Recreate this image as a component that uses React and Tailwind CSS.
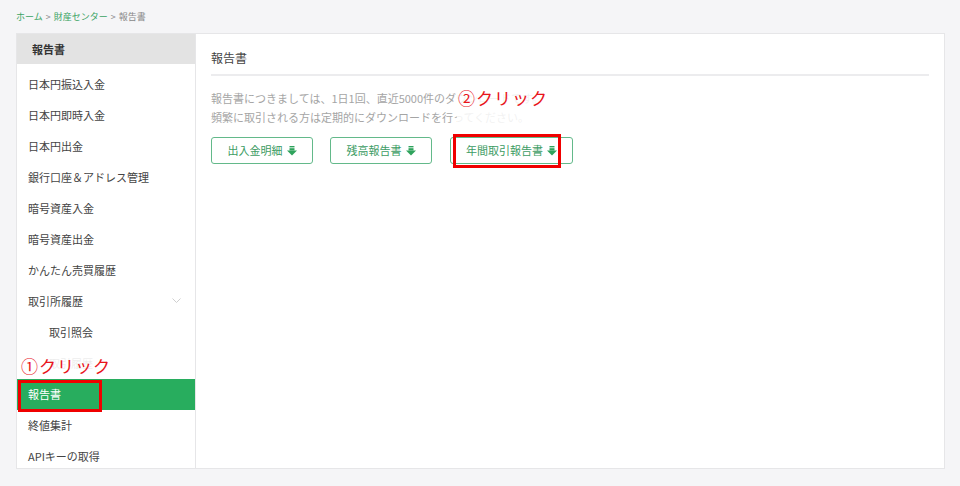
import React from "react";

const font = { fontFamily: '"Noto Sans CJK JP", "Noto Sans", sans-serif' };

function Arrow() {
  return (
    <svg width="10" height="10" viewBox="0 0 10 10" className="inline-block ml-[4px]">
      <rect x="2.5" y="0" width="5" height="1.4" fill="#2fa35c" />
      <rect x="2.5" y="2.2" width="5" height="2.3" fill="#2fa35c" />
      <path d="M0 4.5 H10 L5 9.5 Z" fill="#2fa35c" />
    </svg>
  );
}

function Item({ children, indent, className = "", extra }) {
  return (
    <div
      className={`relative h-[31px] shrink-0 flex items-center text-[11px] text-[#444] ${indent ? "pl-[32px]" : "pl-[11px]"} ${className}`}
    >
      {children}
      {extra}
    </div>
  );
}

function Btn({ children, w }) {
  return (
    <div
      className={`h-[27px] ${w} border border-[#63b98a] rounded-[3px] flex items-center justify-center text-[11px] text-[#3d9c64]`}
    >
      {children}
      <Arrow />
    </div>
  );
}

export default function App() {
  return (
    <div className="w-[960px] h-[486px] bg-[#f5f5f7] pl-[16px] pr-[15px] pt-[9px]" style={font}>
      <div className="h-[16px] flex items-center text-[9px] text-[#888]">
        <span className="text-[#3aa363]">ホーム</span>
        <span className="mx-[3px]">&gt;</span>
        <span className="text-[#3aa363]">財産センター</span>
        <span className="mx-[3px]">&gt;</span>
        <span>報告書</span>
      </div>
      <div className="mt-[8px] h-[436px] flex bg-white border border-[#e6e6e8]">
        <div className="w-[179px] shrink-0 border-r border-[#e6e6e8] flex flex-col">
          <div className="h-[30px] shrink-0 bg-[#e3e3e3] flex items-center pl-[15px] text-[11px] font-bold text-[#333]">
            報告書
          </div>
          <div className="h-[5px] shrink-0" />
          <Item>日本円振込入金</Item>
          <Item>日本円即時入金</Item>
          <Item>日本円出金</Item>
          <Item>銀行口座＆アドレス管理</Item>
          <Item>暗号資産入金</Item>
          <Item>暗号資産出金</Item>
          <Item>かんたん売買履歴</Item>
          <Item
            extra={
              <svg width="9" height="6" viewBox="0 0 9 6" className="absolute right-[14px] top-[12px]">
                <path d="M0.5 0.5 L4.5 4.5 L8.5 0.5" fill="none" stroke="#cfcfcf" strokeWidth="1" />
              </svg>
            }
          >
            取引所履歴
          </Item>
          <Item indent>取引照会</Item>
          <Item
            indent
            extra={
              <div className="absolute left-[1px] top-[4px] w-[101px] h-[27px] bg-white/90 flex items-center pl-[3px] text-[17px] text-[#e8141b] tracking-[1px]">
                ①クリック
              </div>
            }
          >
            取引履歴
          </Item>
          <Item
            className="bg-[#28ad5e] !text-white"
            extra={
              <div className="absolute left-[1px] top-[1px] w-[84px] h-[32px] border-[3px] border-[#f00000]" />
            }
          >
            報告書
          </Item>
          <Item>終値集計</Item>
          <Item>APIキーの取得</Item>
        </div>
        <div className="flex-1 px-[15px] pt-[15px]">
          <div className="h-[18px] flex items-center text-[12px] text-[#444]">報告書</div>
          <div className="mt-[7px] h-[2px] bg-[#ececee]" />
          <div className="relative mt-[13px] text-[11px] leading-[19px] text-[#a5a5a5]">
            <div>報告書につきましては、1日1回、直近5000件のダウンロードです。</div>
            <div>頻繁に取引される方は定期的にダウンロードを行ってください。</div>
            <div className="absolute left-[246px] top-[-2px] w-[112px] h-[36px] bg-white/85 flex items-start pt-[1px] pl-[1px] text-[17px] text-[#e8141b] tracking-[1px]">
              ②クリック
            </div>
          </div>
          <div className="mt-[10px] flex">
            <Btn w="w-[102px]">出入金明細</Btn>
            <div className="w-[17px]" />
            <Btn w="w-[102px]">残高報告書</Btn>
            <div className="w-[18px]" />
            <div className="relative">
              <Btn w="w-[123px]">年間取引報告書</Btn>
              <div className="absolute left-[3px] top-[-3px] w-[108px] h-[34px] border-[3px] border-[#f00000]" />
            </div>
          </div>
        </div>
      </div>
    </div>
  );
}
